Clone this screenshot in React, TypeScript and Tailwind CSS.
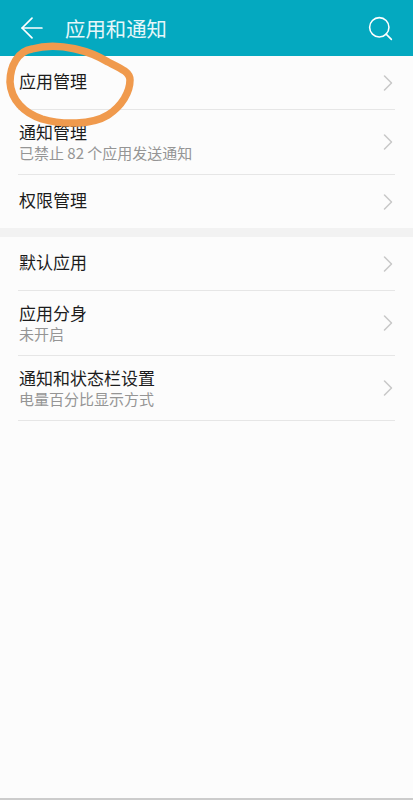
import React from 'react';
import { ArrowLeft, ChevronRight, Search } from 'lucide-react';

type RowProps = { title: string; sub?: string; h: string; line?: boolean };

const Row: React.FC<RowProps> = ({ title, sub, h, line = true }) => (
  <div className={`${h} mx-[18px] flex items-center justify-between pl-px ${line ? 'border-b border-[#e6e6e6]' : ''}`}>
    <div className={`flex flex-col ${sub ? '' : 'pb-[3px]'}`}>
      <span className="text-[17px] leading-[22px] text-[#1c1c1c]">{title}</span>
      {sub && <span className="text-[15px] leading-[20px] mt-[0.5px] text-[#959595]">{sub}</span>}
    </div>
    <ChevronRight className="w-[28px] h-[28px] text-[#c8c8c8] mr-[-7px]" strokeWidth={1.3} />
  </div>
);

export default function App() {
  return (
    <div
      className="relative w-[413px] h-[800px] overflow-hidden bg-[#fcfcfc] flex flex-col border-b-2 border-[#cccccc]"
      style={{ fontFamily: '"Noto Sans CJK SC", "Liberation Sans", sans-serif' }}
    >
      <div className="h-14 shrink-0 bg-[#04a9c0] flex items-center pl-[15px] pr-[18px] text-white">
        <ArrowLeft className="w-[34px] h-[34px] shrink-0" strokeWidth={1.2} />
        <span className="ml-[16px] text-[20.4px] flex-1 text-[#e6f7fa]">应用和通知</span>
        <Search className="w-[29px] h-[29px]" strokeWidth={1.3} />
      </div>

      <Row title="应用管理" h="h-[54px]" />
      <Row title="通知管理" sub="已禁止 82 个应用发送通知" h="h-[65px]" />
      <Row title="权限管理" h="h-[53px]" line={false} />
      <div className="h-[9px] shrink-0 bg-[#f2f2f2]" />
      <Row title="默认应用" h="h-[54px]" />
      <Row title="应用分身" sub="未开启" h="h-[65px]" />
      <Row title="通知和状态栏设置" sub="电量百分比显示方式" h="h-[65px]" />

      <svg className="absolute left-0 top-0 pointer-events-none" width="413" height="140" fill="none">
        <path
          d="M32 49 C18 51 10 66 10 82 C11 100 24 113 42 119 C62 125 92 125 108 115 C122 106 130 92 130 80 C130 72 120 68 108 62 C92 52 60 41 32 49 Z"
          stroke="#f09a4d"
          strokeWidth="7.5"
          strokeLinejoin="round"
        />
      </svg>
    </div>
  );
}
